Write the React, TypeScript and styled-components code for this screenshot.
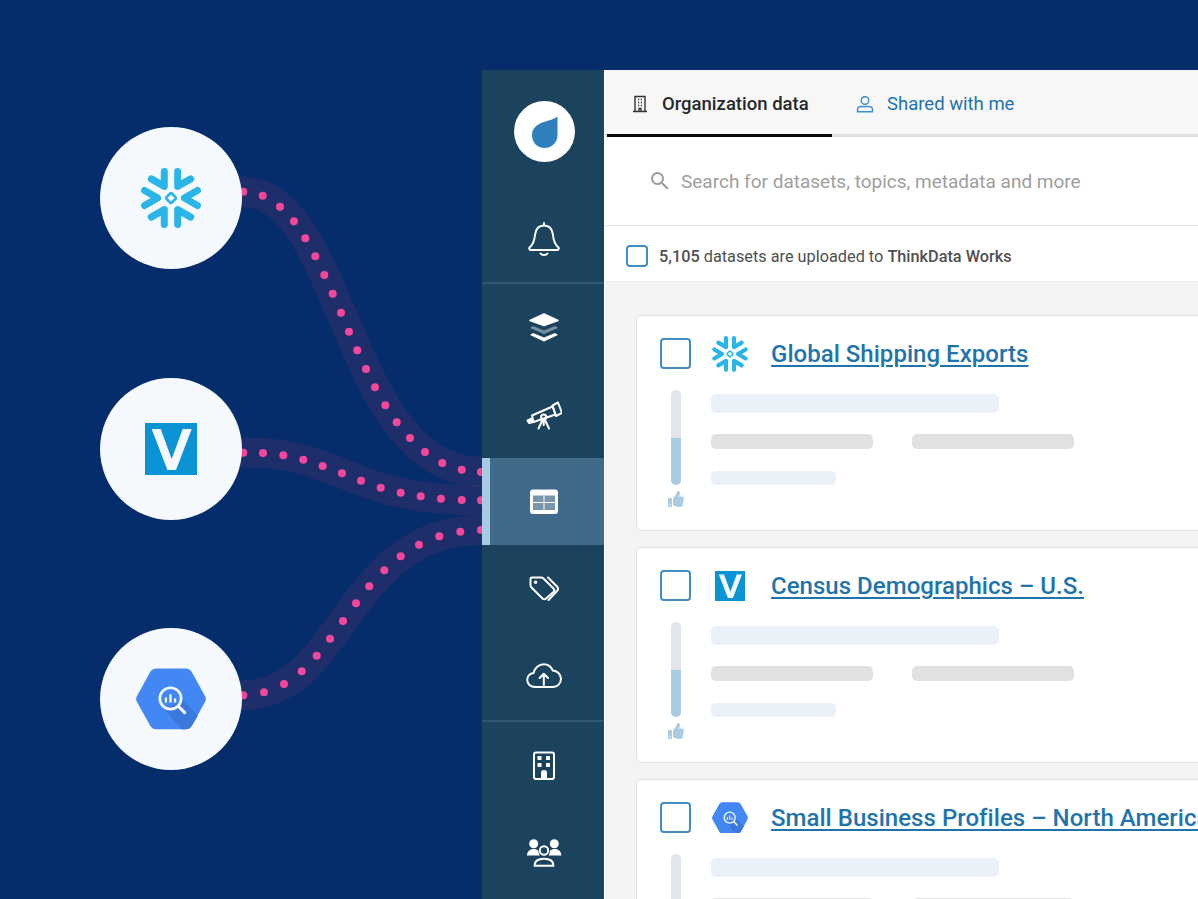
import styled, { createGlobalStyle } from 'styled-components';
import { FaThumbsUp } from 'react-icons/fa';
import { MdSearch } from 'react-icons/md';

type Point = [number, number];

const ROUTES: Point[][] = [
  [[243.3, 191.7], [262.7, 195.7], [280, 206.7], [294, 221.3], [305.3, 238.3], [315.3, 256.3], [324.3, 275], [332.7, 293.7], [341, 312.7], [349, 331.7], [357.3, 350.3], [366, 369], [375, 387.3], [385.3, 405.3], [396.7, 422.3], [410, 438], [425, 452], [442.3, 463], [461.7, 469.7], [481, 472]],
  [[243.3, 452.7], [263, 453], [283.3, 455.3], [303.3, 459.7], [322.7, 466], [342, 473.3], [361, 480.7], [380.7, 487.7], [400.7, 492.7], [420.7, 496.3], [441, 498.7], [461.7, 500], [481, 500.3]],
  [[243.3, 695.3], [264, 692.3], [284, 684], [301.7, 671.3], [316.7, 655.7], [330, 638.7], [343, 621], [356, 603.3], [369.3, 586.3], [384.3, 570.3], [400.7, 556.3], [419, 544.7], [439.3, 536.3], [460.3, 531.7], [481, 530]],
];

// smooth line through the measured dots
const toCurve = (pts: Point[]) => {
  const all: Point[] = [[pts[0][0] - 20, pts[0][1]], ...pts, [pts[pts.length - 1][0] + 3, pts[pts.length - 1][1]]];
  let d = `M${all[0][0]} ${all[0][1]}`;
  for (let i = 0; i < all.length - 1; i++) {
    const p0 = all[Math.max(i - 1, 0)];
    const p1 = all[i];
    const p2 = all[i + 1];
    const p3 = all[Math.min(i + 2, all.length - 1)];
    d += ` C${p1[0] + (p2[0] - p0[0]) / 6} ${p1[1] + (p2[1] - p0[1]) / 6} ${p2[0] - (p3[0] - p1[0]) / 6} ${p2[1] - (p3[1] - p1[1]) / 6} ${p2[0]} ${p2[1]}`;
  }
  return d;
};

const Snowflake = ({ size }: { size: number }) => (
  <svg width={size} height={size} viewBox="-32 -32 64 64" fill="none">
    {[0, 60, 120, 180, 240, 300].map((a) => (
      <path
        key={a}
        d="M26.4 -7.5L13.4 0L26.4 7.5"
        stroke="#29b5e8"
        strokeWidth="7"
        strokeLinecap="round"
        strokeLinejoin="round"
        transform={`rotate(${a})`}
      />
    ))}
    <rect x="-3.8" y="-3.8" width="7.6" height="7.6" rx="1.2" stroke="#29b5e8" strokeWidth="2.6" transform="rotate(45)" />
  </svg>
);

const VerticaMark = ({ size }: { size: number }) => (
  <svg width={size} height={size} viewBox="0 0 52 52">
    <rect width="52" height="52" fill="#0a94d6" />
    <path d="M6.7 6H15.7L26.7 36L37.7 6H46.7L31 47H22.4Z" fill="#f5f9fe" />
  </svg>
);

const BigQueryMark = ({ size }: { size: number }) => (
  <svg width={size} height={size * 0.884} viewBox="0 0 69 61">
    <path d="M1 33.5a6 6 0 0 1 0-6L14 4a7 7 0 0 1 6-3.5h29a7 7 0 0 1 6 3.5l13 23.5a6 6 0 0 1 0 6L55 57a7 7 0 0 1-6 3.5H20a7 7 0 0 1-6-3.5Z" fill="#4387f4" />
    <path d="M28 40.3L44.7 60.5H49a7 7 0 0 0 6-3.5L61 47L46.3 32Z" fill="#3b78dc" />
    <circle cx="34" cy="30" r="10.5" fill="none" stroke="#f5f9fe" strokeWidth="2.6" />
    <path d="M42 38L48 44" stroke="#f5f9fe" strokeWidth="3" strokeLinecap="round" />
    <path d="M29.5 29v5M34 26v8M38.5 30v4" stroke="#f5f9fe" strokeWidth="2.2" />
  </svg>
);

const SOURCES = [<Snowflake size={64} />, <VerticaMark size={52} />, <BigQueryMark size={70} />];

const NavIcon = styled.svg.attrs({ width: 36, height: 36, viewBox: '0 0 36 36', fill: 'none' })`
  display: block;
  stroke: #fff;
  stroke-width: 2;
  stroke-linecap: round;
  stroke-linejoin: round;
`;

const NAV_ICONS = {
  bell: (
    <NavIcon>
      <path d="M18 4.5C11.5 4.5 9.5 9.5 9 14C8.5 20 7 23.5 3.5 26.5C2.8 27.6 3.5 29 5 29H31C32.5 29 33.2 27.6 32.5 26.5C29 23.5 27.5 20 27 14C26.5 9.5 24.5 4.5 18 4.5Z" />
      <path d="M18 2V4.5M14.5 32.5A4 3 0 0 0 21.5 32.5" />
    </NavIcon>
  ),
  layers: (
    <NavIcon stroke="none">
      <path d="M18 4L32 10.5L18 15.5L4 10.5Z" fill="#fff" strokeWidth="1.5" />
      <path d="M7 16L18 20.5L29 16L32 18L18 24L4 18Z" fill="#fff" fillOpacity=".4" stroke="none" />
      <path d="M7 23L18 27.5L29 23L32 25L18 31.5L4 25Z" fill="#fff" stroke="none" />
    </NavIcon>
  ),
  telescope: (
    <NavIcon strokeWidth="2.2">
      <path d="M1.5 23.5L6 21.5L7.5 25L3 26Z" fill="#fff" />
      <path d="M6 18.5L26.5 9.5L29.5 17.5L7.5 25Z" />
      <path d="M26.5 8.5L32 5.5L36 16L30 19Z" />
      <circle cx="17.7" cy="20" r="2.6" />
      <path d="M16.5 23L12.5 31.5M19 23L23 31.5M17.7 23V28" />
    </NavIcon>
  ),
  table: (
    <NavIcon stroke="none">
      <rect x="4" y="5.5" width="28" height="24.5" rx="3" fill="#fff" stroke="none" />
      <rect x="7" y="11.5" width="10.5" height="6.5" fill="#7895ab" stroke="none" />
      <rect x="18.5" y="11.5" width="10.5" height="6.5" fill="#7895ab" stroke="none" />
      <rect x="7" y="19" width="10.5" height="7" fill="#7895ab" stroke="none" />
      <rect x="18.5" y="19" width="10.5" height="7" fill="#7895ab" stroke="none" />
    </NavIcon>
  ),
  tags: (
    <NavIcon>
      <path d="M6 6.5H15C16 6.5 16.8 6.8 17.5 7.5L27.5 17.5C28.5 18.5 28.5 20 27.5 21L20 27.5C19 28.5 17.5 28.5 16.5 27.5L6 17C5 16 4.5 15 4.5 14V8C4.5 7 5 6.5 6 6.5Z" />
      <path d="M22 6.5L31 15.5C32.5 17 32.5 18.5 31 20L22.5 29" />
      <circle cx="9.6" cy="11.2" r=".8" fill="#fff" />
    </NavIcon>
  ),
  cloud: (
    <NavIcon>
      <path d="M9 29C4.5 29 1.2 25.8 1.2 22C1.2 18.2 4 15.5 7.5 15C8.5 9.8 13 6.2 17.8 6.2C22 6.2 25.2 8.6 26.8 12.5C31.5 12.8 35 16.6 35 20.8C35 25.5 31.5 29 27 29Z" />
      <path d="M17.8 27V16M13.6 20L17.8 15.8L22 20" />
    </NavIcon>
  ),
  building: (
    <NavIcon>
      <rect x="8" y="4.5" width="20" height="26.5" rx="2" />
      <g fill="#fff" stroke="none">
        <rect x="11.5" y="8" width="4" height="4" rx=".6" />
        <rect x="20" y="8" width="4" height="4" rx=".6" />
        <rect x="11.5" y="15" width="4" height="4" rx=".6" />
        <rect x="20" y="15" width="4" height="4" rx=".6" />
        <path d="M15 31V25A3 3 0 0 1 21 25V31Z" />
      </g>
    </NavIcon>
  ),
  users: (
    <NavIcon>
      <g fill="#fff" stroke="none">
        <circle cx="7.7" cy="8.7" r="4.5" />
        <circle cx="28.3" cy="8.7" r="4.5" />
        <path d="M1 20.5C1 16.5 4 14 7.5 14C9.5 14 11 14.6 12.5 15.8C12.5 17.6 13 19 13.8 20.5Z" />
        <path d="M35.4 20.5C35.4 16.5 32.4 14 28.9 14C26.9 14 25.4 14.6 23.9 15.8C23.9 17.6 23.4 19 22.6 20.5Z" />
      </g>
      <circle cx="18" cy="15.5" r="4.2" />
      <path d="M8.5 30.8C8.5 26 12.5 23.8 18 23.8C23.5 23.8 27.5 26 27.5 30.8Z" />
    </NavIcon>
  ),
};

const DATASETS = [
  { title: 'Global Shipping Exports', logo: <Snowflake size={38} /> },
  { title: 'Census Demographics – U.S.', logo: <VerticaMark size={30} /> },
  { title: 'Small Business Profiles – North America', logo: <BigQueryMark size={36} /> },
];

export default function App() {
  return (
    <Stage>
      <GlobalStyle />
      <Sources>
        <Connectors viewBox="0 0 482 899">
          {ROUTES.map((pts, i) => (
            <g key={i}>
              <path d={toCurve(pts)} fill="none" stroke="#f0406f" strokeOpacity=".11" strokeWidth="30" />
              {pts.map(([x, y]) => (
                <circle key={`${x}-${y}`} cx={x} cy={y} r="4" fill="#f2479a" />
              ))}
            </g>
          ))}
        </Connectors>
        {SOURCES.map((mark, i) => (
          <SourceNode key={i}>{mark}</SourceNode>
        ))}
      </Sources>

      <Sidebar>
        <LogoCell>
          <LogoBadge>
            <svg width="61" height="61" viewBox="0 0 61 61">
              <path d="M43.5 15.5V34C43.5 41.5 38 47 30.5 47C23.5 47 18 41.5 18 34.5C18 27 23 23 30 21C35 19.5 40 18 43.5 15.5Z" fill="#2f80bd" />
            </svg>
          </LogoBadge>
        </LogoCell>
        <NavItem>{NAV_ICONS.bell}</NavItem>
        <NavGroup>
          <NavItem>{NAV_ICONS.layers}</NavItem>
          <NavItem>{NAV_ICONS.telescope}</NavItem>
          <NavItem $active>{NAV_ICONS.table}</NavItem>
          <NavItem>{NAV_ICONS.tags}</NavItem>
          <NavItem>{NAV_ICONS.cloud}</NavItem>
        </NavGroup>
        <NavGroup>
          <NavItem>{NAV_ICONS.building}</NavItem>
          <NavItem>{NAV_ICONS.users}</NavItem>
        </NavGroup>
      </Sidebar>

      <Main>
        <Tabs>
          <Tab $active>
            <svg width="16" height="18" viewBox="0 0 16 18" fill="none" stroke="#333" strokeWidth="1.4">
              <path d="M3 1.5H13V16.5H3ZM1 16.5H15" />
              <path d="M6 4.5H7.2M8.8 4.5H10M6 7.5H7.2M8.8 7.5H10M6 10.5H7.2M8.8 10.5H10M7 16.5V13.5H9V16.5" />
            </svg>
            Organization data
          </Tab>
          <Tab>
            <svg width="18" height="18" viewBox="0 0 18 18" fill="none" stroke="#3f8fc4" strokeWidth="1.4">
              <circle cx="9" cy="5.5" r="3.8" />
              <path d="M1.5 16.8V14.5C1.5 12.5 3.5 11.5 5.5 11.5H12.5C14.5 11.5 16.5 12.5 16.5 14.5V16.8Z" />
            </svg>
            Shared with me
          </Tab>
        </Tabs>
        <SearchRow>
          <MdSearch size={24} color="#9b9b9b" />
          Search for datasets, topics, metadata and more
        </SearchRow>
        <CountRow>
          <Checkbox $size={22} />
          <span>
            <b>5,105</b> datasets are uploaded to <b>ThinkData Works</b>
          </span>
        </CountRow>
        <CardList>
          {DATASETS.map((d) => (
            <Card key={d.title}>
              <CardHead>
                <Checkbox $size={31} />
                <LogoSlot>{d.logo}</LogoSlot>
                <Title>{d.title}</Title>
              </CardHead>
              <CardBody>
                <ScoreColumn>
                  <ScoreTrack>
                    <ScoreFill />
                  </ScoreTrack>
                  <FaThumbsUp size={16} color="#a9cce3" />
                </ScoreColumn>
                <Lines>
                  <Line $w={288} $h={19} $tone="blue" />
                  <LineRow>
                    <Line $w={162} $h={15} $tone="grey" />
                    <Line $w={162} $h={15} $tone="grey" />
                  </LineRow>
                  <Line $w={125} $h={14} $tone="blue" />
                </Lines>
              </CardBody>
            </Card>
          ))}
        </CardList>
      </Main>
    </Stage>
  );
}

const GlobalStyle = createGlobalStyle`
  html, body {
    margin: 0;
    background: #052c6b;
    font-family: Roboto, 'Liberation Sans', sans-serif;
  }
`;

const Stage = styled.div`
  width: 1198px;
  height: 899px;
  padding-top: 70px;
  box-sizing: border-box;
  display: flex;
  overflow: hidden;
  background: #052c6b;
`;

const Sources = styled.div`
  position: relative;
  width: 482px;
  flex: none;
  padding: 57px 0 0 100px;
  box-sizing: border-box;
  display: flex;
  flex-direction: column;
  gap: 108.5px;
`;

const Connectors = styled.svg`
  position: absolute;
  left: 0;
  top: -70px;
  width: 482px;
  height: 899px;
`;

const SourceNode = styled.div`
  position: relative;
  width: 142px;
  height: 142px;
  flex: none;
  border-radius: 50%;
  background: #f5f9fe;
  display: flex;
  align-items: center;
  justify-content: center;
`;

const Sidebar = styled.nav`
  width: 122px;
  flex: none;
  background: #1c435e;
  display: flex;
  flex-direction: column;
`;

const LogoCell = styled.div`
  height: 125px;
  padding: 31px 0 0 2px;
  box-sizing: border-box;
  display: flex;
  justify-content: center;
`;

const LogoBadge = styled.div`
  width: 61px;
  height: 61px;
  border-radius: 50%;
  background: #fff;
`;

const NavGroup = styled.div`
  border-top: 2px solid #33576f;
  padding-bottom: 1px;
`;

const NavItem = styled.div<{ $active?: boolean }>`
  height: 87px;
  display: flex;
  align-items: center;
  justify-content: center;
  box-sizing: border-box;
  background: ${({ $active }) => ($active ? '#41698a' : 'transparent')};
  border-left: 8px solid ${({ $active }) => ($active ? '#a8cbe4' : 'transparent')};
  padding-right: 6px;
`;

const Main = styled.main`
  flex: 1;
  min-width: 0;
  border-left: 1px solid #fff;
  background: #f3f3f3;
  display: flex;
  flex-direction: column;
`;

const Tabs = styled.div`
  height: 67px;
  flex: none;
  box-sizing: border-box;
  padding-left: 2px;
  display: flex;
  background: #f7f7f7;
  border-bottom: 3px solid #e0e0e0;
`;

const Tab = styled.div<{ $active?: boolean }>`
  height: 67px;
  width: ${({ $active }) => ($active ? '225px' : 'auto')};
  box-sizing: border-box;
  padding: 4px 0 0 ${({ $active }) => ($active ? '25px' : '24px')};
  display: flex;
  align-items: center;
  gap: ${({ $active }) => ($active ? '14px' : '13px')};
  font-size: 18.5px;
  font-weight: ${({ $active }) => ($active ? 500 : 400)};
  color: ${({ $active }) => ($active ? '#26292c' : '#1f74ac')};
  border-bottom: 3px solid ${({ $active }) => ($active ? '#0a0a0a' : 'transparent')};
`;

const SearchRow = styled.div`
  height: 89px;
  flex: none;
  box-sizing: border-box;
  padding-left: 43px;
  display: flex;
  align-items: center;
  gap: 9px;
  background: #fff;
  border-bottom: 1px solid #e4e4e4;
  font-size: 19px;
  color: #9e9e9e;
  white-space: nowrap;
`;

const CountRow = styled.div`
  height: 56px;
  flex: none;
  box-sizing: border-box;
  padding: 5px 0 0 21px;
  display: flex;
  align-items: center;
  gap: 11px;
  background: #fff;
  border-bottom: 1px solid #ededed;
  font-size: 16.3px;
  color: #4f4f4f;
  white-space: nowrap;

  b {
    font-weight: 500;
  }
`;

const Checkbox = styled.div<{ $size: number }>`
  width: ${({ $size }) => $size}px;
  height: ${({ $size }) => $size}px;
  flex: none;
  box-sizing: border-box;
  border: 2px solid #3f8fc4;
  border-radius: 4px;
  background: #fff;
`;

const CardList = styled.div`
  padding: 33px 0 0 31px;
  display: flex;
  flex-direction: column;
  gap: 16px;
`;

const Card = styled.article`
  width: 700px;
  height: 216px;
  flex: none;
  box-sizing: border-box;
  padding: 22px 0 0 23px;
  background: #fff;
  border: 1px solid #e2e2e2;
  border-radius: 6px;
`;

const CardHead = styled.div`
  display: flex;
  align-items: center;
  height: 31px;
`;

const LogoSlot = styled.div`
  width: 38px;
  margin-left: 20px;
  display: flex;
  justify-content: center;
`;

const Title = styled.a`
  margin-left: 22px;
  font-size: 24px;
  font-weight: 500;
  letter-spacing: 0.03px;
  color: #1f74ac;
  text-decoration: underline;
  text-underline-offset: 3px;
  text-decoration-thickness: 1.5px;
  white-space: nowrap;
`;

const CardBody = styled.div`
  display: flex;
  margin-top: 21px;
`;

const ScoreColumn = styled.div`
  width: 31px;
  display: flex;
  flex-direction: column;
  align-items: center;
  gap: 6px;
`;

const ScoreTrack = styled.div`
  width: 10px;
  height: 95px;
  border-radius: 5px;
  background: #e2e6eb;
  overflow: hidden;
  display: flex;
  align-items: flex-end;
`;

const ScoreFill = styled.div`
  width: 100%;
  height: 50%;
  background: #a9cce3;
`;

const Lines = styled.div`
  margin: 4px 0 0 20px;
  display: flex;
  flex-direction: column;
  gap: 21px;
`;

const LineRow = styled.div`
  display: flex;
  gap: 39px;
  margin-bottom: 1px;
`;

const Line = styled.div<{ $w: number; $h: number; $tone: 'blue' | 'grey' }>`
  width: ${({ $w }) => $w}px;
  height: ${({ $h }) => $h}px;
  border-radius: 5px;
  background: ${({ $tone }) => ($tone === 'blue' ? '#e9f0f8' : '#e1e1e1')};
`;
